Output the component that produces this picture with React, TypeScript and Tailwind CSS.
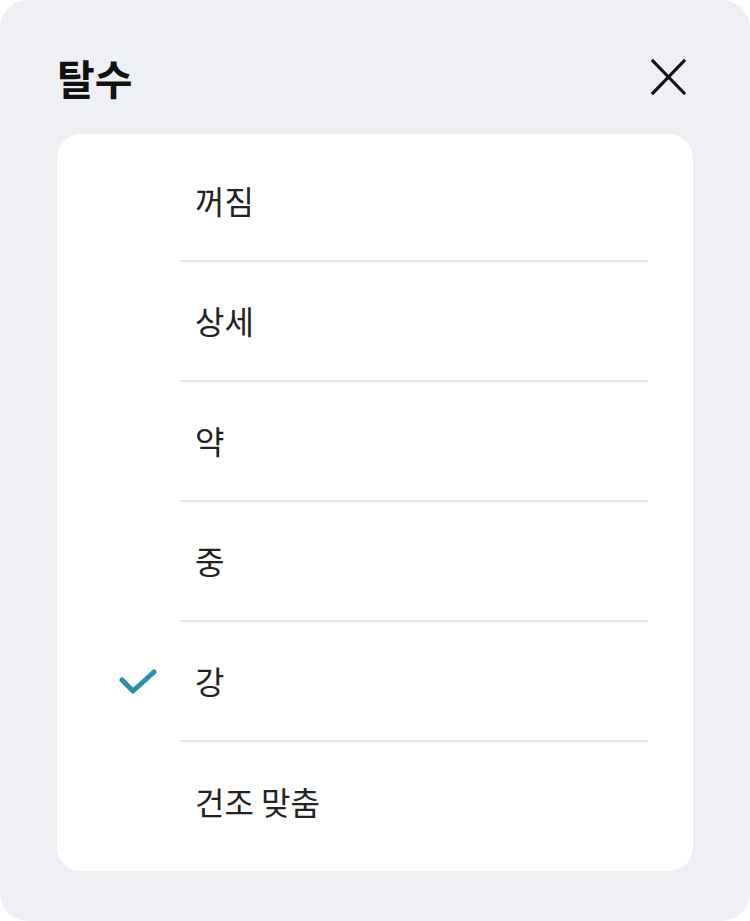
const items = ['꺼짐', '상세', '약', '중', '강', '건조 맞춤'];
const selected = '강';

function CheckIcon() {
  return (
    <svg width="38" height="26" viewBox="0 0 38 26" fill="none">
      <path d="M3 11 L14 22 L35 3" stroke="#2b90a6" strokeWidth="5" strokeLinecap="round" strokeLinejoin="round" />
    </svg>
  );
}

function CloseIcon() {
  return (
    <svg width="36" height="36" viewBox="0 0 36 36" fill="none">
      <path d="M3 2 L34 34 M34 2 L3 34" stroke="#111111" strokeWidth="3.2" strokeLinecap="square" />
    </svg>
  );
}

export default function App() {
  return (
    <div
      className="w-[750px] h-[921px] bg-[#eff0f4] rounded-[28px] px-[57px] overflow-hidden"
      style={{ fontFamily: '"Noto Sans CJK KR", "Noto Sans", sans-serif' }}
    >
      <div className="h-[134px] flex items-center justify-between pt-[20px]">
        <h1 className="text-[41px] font-bold text-[#111111] leading-none">탈수</h1>
        <button className="mr-[7px]">
          <CloseIcon />
        </button>
      </div>
      <div className="bg-white rounded-[24px] pt-[8px] pb-[9px]">
        {items.map((item, i) => (
          <div key={item} className="flex h-[120px]">
            <div className="w-[123px] flex items-center pl-[62px]">
              {item === selected && <CheckIcon />}
            </div>
            <div
              className={
                i < items.length - 1
                  ? 'flex-1 mr-[45px] flex items-center pl-[15px] pb-[3px] border-b-2 border-[#e6e7ee]'
                  : 'flex-1 mr-[45px] flex items-center pl-[15px] pb-[3px]'
              }
            >
              <span className="text-[32px] text-[#222222] leading-none">{item}</span>
            </div>
          </div>
        ))}
      </div>
    </div>
  );
}
